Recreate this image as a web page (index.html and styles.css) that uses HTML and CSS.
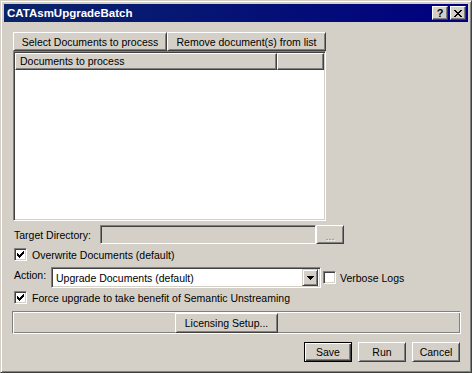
FILE: index.html
```html
<!DOCTYPE html>
<html>
<head>
    <title>CATAsmUpgradeBatch</title>
    <link rel="stylesheet" href="styles.css">
</head>
<body>
    <div class="window">
        <div class="titlebar">
            <span class="title">CATAsmUpgradeBatch</span>
            <div class="title-buttons">
                <span class="tbtn help">?</span>
                <span class="tbtn close">
                    <svg width="8" height="7" viewBox="0 0 8 7" shape-rendering="crispEdges">
                        <path d="M0 0h2v1h-2z M1 1h2v1h-2z M2 2h4v1h-4z M3 3h2v1h-2z M2 4h4v1h-4z M1 5h2v1h-2z M0 6h2v1h-2z M6 0h2v1h-2z M5 1h2v1h-2z M5 5h2v1h-2z M6 6h2v1h-2z" fill="#000"/>
                    </svg>
                </span>
            </div>
        </div>

        <div class="content">
            <div class="toolbar">
                <button class="btn btn-select">Select Documents to process</button>
                <button class="btn btn-remove">Remove document(s) from list</button>
            </div>

            <div class="listbox">
                <div class="list-head">
                    <div class="col col-name">Documents to process</div>
                    <div class="col col-extra"></div>
                </div>
            </div>

            <div class="row target-row">
                <label class="target-label">Target Directory:</label>
                <div class="field disabled"></div>
                <button class="btn btn-browse">...</button>
            </div>

            <div class="row check-row overwrite-row">
                <span class="checkbox checked">
                    <svg width="13" height="13" viewBox="0 0 13 13" shape-rendering="crispEdges">
                        <path d="M3 5h1v3h-1z M4 6h1v3h-1z M5 7h1v3h-1z M6 6h1v3h-1z M7 5h1v3h-1z M8 4h1v3h-1z M9 3h1v3h-1z" fill="#000"/>
                    </svg>
                </span>
                <span class="check-label">Overwrite Documents (default)</span>
            </div>

            <div class="row action-row">
                <label class="action-label">Action:</label>
                <div class="combo">
                    <span class="combo-text">Upgrade Documents (default)</span>
                    <span class="combo-btn">
                        <svg width="7" height="4" viewBox="0 0 7 4" shape-rendering="crispEdges">
                            <path d="M0 0h7v1h-7z M1 1h5v1h-5z M2 2h3v1h-3z M3 3h1v1h-1z" fill="#000"/>
                        </svg>
                    </span>
                </div>
                <span class="checkbox verbose-box"></span>
                <span class="verbose-label">Verbose Logs</span>
            </div>

            <div class="row check-row force-row">
                <span class="checkbox checked">
                    <svg width="13" height="13" viewBox="0 0 13 13" shape-rendering="crispEdges">
                        <path d="M3 5h1v3h-1z M4 6h1v3h-1z M5 7h1v3h-1z M6 6h1v3h-1z M7 5h1v3h-1z M8 4h1v3h-1z M9 3h1v3h-1z" fill="#000"/>
                    </svg>
                </span>
                <span class="check-label">Force upgrade to take benefit of Semantic Unstreaming</span>
            </div>

            <div class="license-frame">
                <button class="btn btn-license">Licensing Setup...</button>
            </div>

            <div class="footer">
                <button class="btn btn-footer default">Save</button>
                <button class="btn btn-footer">Run</button>
                <button class="btn btn-footer">Cancel</button>
            </div>
        </div>
    </div>
</body>
</html>
```

FILE: styles.css
```css
body {
    margin: 0;
    font-family: "Liberation Sans", Arial, sans-serif;
    font-size: 10.5px;
    color: #000;
    background-color: #d4d0c8;
}
.window {
    width: 472px;
    height: 373px;
    box-sizing: border-box;
    background-color: #d4d0c8;
    border: 1px solid;
    border-color: #d4d0c8 #404040 #404040 #d4d0c8;
    box-shadow: inset 1px 1px #fff, inset -1px -1px #808080;
    padding: 3px;
    display: flex;
    flex-direction: column;
}
.titlebar {
    height: 18px;
    display: flex;
    align-items: center;
    justify-content: space-between;
    padding: 0 2px 0 3px;
    background: linear-gradient(to right, #0a246a, #000080);
}
.title {
    color: #fff;
    font-weight: bold;
    font-size: 11.5px;
}
.title-buttons {
    display: flex;
    gap: 2px;
}
.tbtn {
    width: 16px;
    height: 14px;
    box-sizing: border-box;
    display: flex;
    align-items: center;
    justify-content: center;
    background-color: #d4d0c8;
    border: 1px solid;
    border-color: #fff #404040 #404040 #fff;
    box-shadow: inset -1px -1px #808080;
}
.help {
    font-weight: bold;
    font-size: 11px;
    line-height: 12px;
}
.content {
    flex: 1;
    display: flex;
    flex-direction: column;
    padding: 10px 8px 0 9px;
}

/* buttons */
.btn {
    box-sizing: border-box;
    margin: 0;
    padding: 0;
    font-family: inherit;
    font-size: inherit;
    color: #000;
    background-color: #d4d0c8;
    border: 1px solid;
    border-color: #fff #404040 #404040 #fff;
    box-shadow: inset 1px 1px #d4d0c8, inset -1px -1px #808080;
    border-radius: 0;
    cursor: pointer;
}
.btn.default {
    border-color: #000;
    box-shadow: inset 1px 1px #fff, inset -1px -1px #404040, inset -2px -2px #808080;
}
.toolbar {
    display: flex;
    height: 19px;
}
.btn-select {
    width: 154px;
}
.btn-remove {
    width: 159px;
}

/* list */
.listbox {
    width: 313px;
    height: 170px;
    box-sizing: border-box;
    background-color: #fff;
    border: 1px solid;
    border-color: #808080 #fff #fff #808080;
    box-shadow: inset 1px 1px #404040, inset -1px -1px #d4d0c8;
    padding: 1px;
    overflow: hidden;
}
.list-head {
    display: flex;
    height: 17px;
}
.col {
    box-sizing: border-box;
    height: 17px;
    line-height: 15px;
    padding-left: 4px;
    background-color: #d4d0c8;
    border: 1px solid;
    border-color: #fff #404040 #404040 #fff;
    box-shadow: inset -1px -1px #808080;
}
.col-name {
    width: 262px;
}
.col-extra {
    width: 47px;
}

/* rows */
.row {
    display: flex;
    align-items: center;
}
.target-row {
    margin-top: 4px;
    height: 19px;
}
.target-label {
    margin-left: 1px;
    width: 86px;
}
.field {
    width: 216px;
    height: 19px;
    box-sizing: border-box;
    background-color: #fff;
    border: 1px solid;
    border-color: #808080 #fff #fff #808080;
    box-shadow: inset 1px 1px #404040, inset -1px -1px #d4d0c8;
}
.field.disabled {
    background-color: #d4d0c8;
}
.btn-browse {
    width: 28px;
    height: 19px;
    color: #808080;
    text-shadow: 1px 1px #fff;
    line-height: 17px;
    padding-top: 2px;
}
.checkbox {
    width: 13px;
    height: 13px;
    box-sizing: border-box;
    flex-shrink: 0;
    background-color: #fff;
    border: 1px solid;
    border-color: #808080 #fff #fff #808080;
    box-shadow: inset 1px 1px #404040, inset -1px -1px #d4d0c8;
    position: relative;
}
.checkbox svg {
    position: absolute;
    left: -1px;
    top: -1px;
}
.check-row {
    height: 13px;
}
.check-row .checkbox {
    margin-left: 1px;
}
.check-label {
    margin-left: 5px;
}
.overwrite-row {
    margin-top: 4px;
}
.action-row {
    margin-top: 6px;
    height: 21px;
}
.action-label {
    margin-left: 1px;
    width: 37px;
    align-self: flex-start;
    padding-top: 2px;
}
.combo {
    width: 270px;
    height: 21px;
    box-sizing: border-box;
    display: flex;
    align-items: center;
    justify-content: space-between;
    padding: 0 2px 0 4px;
    background-color: #fff;
    border: 1px solid;
    border-color: #808080 #fff #fff #808080;
    box-shadow: inset 1px 1px #404040, inset -1px -1px #d4d0c8;
}
.combo-text {
    padding-top: 1px;
}
.combo-btn {
    width: 16px;
    height: 17px;
    box-sizing: border-box;
    display: flex;
    align-items: center;
    justify-content: center;
    background-color: #d4d0c8;
    border: 1px solid;
    border-color: #d4d0c8 #404040 #404040 #d4d0c8;
    box-shadow: inset 1px 1px #fff, inset -1px -1px #808080;
}
.verbose-box {
    margin-left: 2px;
}
.verbose-label {
    margin-left: 4px;
}
.force-row {
    margin-top: 3px;
}

/* licensing */
.license-frame {
    margin-top: 7px;
    margin-left: -1px;
    width: 449px;
    height: 23px;
    box-sizing: border-box;
    display: flex;
    align-items: flex-start;
    padding: 1px 0 0 162px;
    border: 1px solid;
    border-color: #808080 #fff #fff #808080;
    box-shadow: inset 1px 1px #fff, inset -1px -1px #808080;
}
.btn-license {
    width: 103px;
    height: 20px;
}

/* footer */
.footer {
    margin-top: 8px;
    display: flex;
    justify-content: flex-end;
    gap: 6px;
}
.btn-footer {
    width: 48px;
    height: 20px;
}
```
